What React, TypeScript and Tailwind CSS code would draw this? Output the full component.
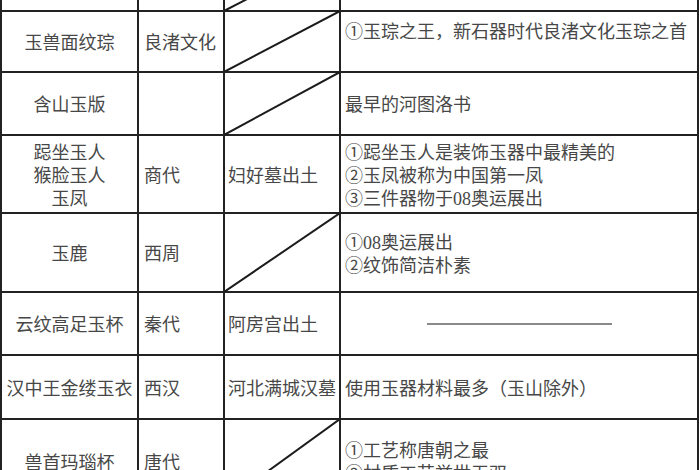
import React from "react";

type Row = {
  h: string;
  name: string[];
  era?: string;
  site?: string;
  notes?: string[];
  slash?: boolean;
  dash?: boolean;
};

const ROWS: Row[] = [
  { h: "h-[60px]", name: [], slash: true },
  { h: "h-[61px]", name: ["玉兽面纹琮"], era: "良渚文化", slash: true, notes: ["①玉琮之王，新石器时代良渚文化玉琮之首", "\u00a0"] },
  { h: "h-[63px]", name: ["含山玉版"], slash: true, notes: ["最早的河图洛书"] },
  {
    h: "h-[78px]",
    name: ["跽坐玉人", "猴脸玉人", "玉凤"],
    era: "商代",
    site: "妇好墓出土",
    notes: ["①跽坐玉人是装饰玉器中最精美的", "②玉凤被称为中国第一凤", "③三件器物于08奥运展出"],
  },
  { h: "h-[79px]", name: ["玉鹿"], era: "西周", slash: true, notes: ["①08奥运展出", "②纹饰简洁朴素"] },
  { h: "h-[63px]", name: ["云纹高足玉杯"], era: "秦代", site: "阿房宫出土", dash: true },
  { h: "h-[64px]", name: ["汉中王金缕玉衣"], era: "西汉", site: "河北满城汉墓", notes: ["使用玉器材料最多（玉山除外）"] },
  { h: "h-[84px]", name: ["兽首玛瑙杯"], era: "唐代", slash: true, notes: ["①工艺称唐朝之最", "②材质工艺举世无双"] },
];

function Slash() {
  return (
    <svg className="absolute -left-[1px] -top-[1px] w-[calc(100%+2px)] h-[calc(100%+2px)]" preserveAspectRatio="none" viewBox="0 0 100 100">
      <line x1="0" y1="100" x2="100" y2="0" stroke="#1c1c1c" strokeWidth="2" vectorEffect="non-scaling-stroke" />
    </svg>
  );
}

export default function App() {
  return (
    <div className="w-[700px] h-[470px] overflow-hidden bg-white">
      <div
        className="-mt-[50px] w-[699px] border-l-2 border-t-2 border-[#222] grid grid-cols-[137px_86px_116px_358px] text-[18px] leading-[23px] text-[#474747]"
        style={{ fontFamily: '"Liberation Serif", "Noto Sans CJK SC", serif' }}
      >
        {ROWS.map((r, i) => (
          <React.Fragment key={i}>
            {/* name */}
            <div className={`${r.h} border-r-2 border-b-2 border-[#222] flex flex-col items-center justify-center pt-1 text-center`}>
              {r.name.map((n) => (
                <span key={n} className="whitespace-nowrap">{n}</span>
              ))}
            </div>
            {/* era */}
            <div className={`${r.h} border-r-2 border-b-2 border-[#222] flex items-center pl-[5px] pt-1 whitespace-nowrap`}>
              {r.era}
            </div>
            {/* site */}
            <div className={`${r.h} relative border-r-2 border-b-2 border-[#222] flex items-center pl-[3px] pt-1 whitespace-nowrap`}>
              {r.slash && <Slash />}
              {r.site}
            </div>
            {/* notes */}
            <div className={`${r.h} border-r-2 border-b-2 border-[#222] flex flex-col justify-center pl-[4px] pt-1`}>
              {r.dash ? (
                <div className="self-center -ml-[4px] w-[185px] h-[2px] bg-[#8a8a8a] -mt-[4px]" />
              ) : (
                r.notes?.map((n, k) => (
                  <span key={k} className="whitespace-nowrap">{n}</span>
                ))
              )}
            </div>
          </React.Fragment>
        ))}
      </div>
    </div>
  );
}
